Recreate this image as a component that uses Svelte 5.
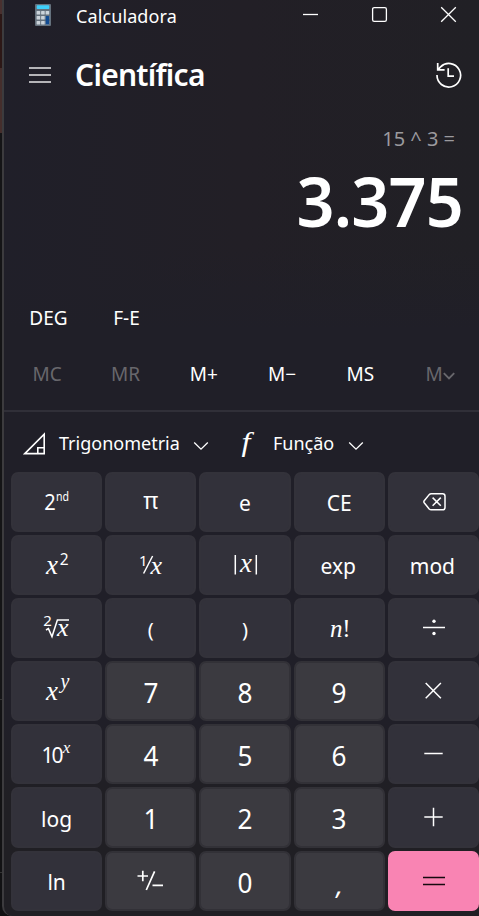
<script>
  const keys = [
    { id: 'second' }, { id: 'pi' }, { text: 'e' }, { text: 'CE' }, { id: 'back' },
    { id: 'square' }, { id: 'inverse' }, { id: 'abs' }, { text: 'exp', dx: -1 }, { text: 'mod', dx: -1 },
    { id: 'root' }, { text: '(', cls: 'paren' }, { text: ')', cls: 'paren' }, { id: 'fact' }, { id: 'divide' },
    { id: 'power' }, { num: '7' }, { num: '8' }, { num: '9' }, { id: 'times' },
    { id: 'ten' }, { num: '4' }, { num: '5' }, { num: '6' }, { id: 'minus' },
    { text: 'log' }, { num: '1' }, { num: '2' }, { num: '3' }, { id: 'plus' },
    { text: 'ln' }, { id: 'sign', light: true }, { num: '0' }, { num: ',' }, { id: 'equals' }
  ];
  const memory = [
    ['MC', true], ['MR', true], ['M+', false], ['M−', false], ['MS', false]
  ];
</script>

<div class="desk">
  <main class="window">
    <header class="titlebar">
      <svg class="logo" width="18" height="24" viewBox="0 0 18 24">
        <rect x="1" y="1" width="16" height="22" rx="1" fill="#65717d" />
        <rect x="2.7" y="2.3" width="12.6" height="3.6" rx=".6" fill="#3fd0fb" />
        {#each [8, 13, 18] as y}
          {#each [2.6, 7.1, 11.6] as x}
            <rect {x} {y} width="3.6" height="3.5" rx=".5" fill="#cbd3da" />
          {/each}
        {/each}
        <rect x="11.6" y="13" width="3.6" height="8.5" rx=".5" fill="#104a91" />
      </svg>
      <span class="app">Calculadora</span>
      <svg class="controls" width="156" height="20" viewBox="0 0 156 20" fill="none" stroke="#fff" stroke-width="1.3">
        <path d="M1 10.5H16" />
        <rect x="70.6" y="3.6" width="13.8" height="13.8" rx="1.6" />
        <path d="M139.2 3.2l14.6 14.6M153.8 3.2L139.2 17.8" />
      </svg>
    </header>

    <div class="heading">
      <svg width="24" height="18" viewBox="0 0 24 18" stroke="#e6e6e8" stroke-width="1.4">
        <path d="M1 2H23M1 9H23M1 16H23" />
      </svg>
      <h1>Científica</h1>
      <svg class="history" width="28" height="28" viewBox="0 0 28 28" fill="none" stroke="#fff" stroke-width="1.7">
        <path d="M2 14A11.8 11.8 0 1 0 5.6 5.8L3.2 8.6M2.7 2V8.9H9.6M13.2 7.2V15.2H19" />
      </svg>
    </div>

    <div class="expression">15 ^ 3 =</div>
    <div class="result">3.375</div>

    <div class="modes"><span>DEG</span><span>F-E</span></div>
    <div class="memory">
      {#each memory as [label, off]}
        <span class:off>{label}</span>
      {/each}
      <span class="off last">M<svg width="12" height="8" viewBox="0 0 12 8" fill="none" stroke="currentColor" stroke-width="1.9"><path d="M.8 1.2L6 6.4L11.2 1.2" /></svg></span>
    </div>

    <div class="groups">
      <svg class="angle" width="24" height="24" viewBox="0 0 24 24" fill="none" stroke="#fff" stroke-width="1.6">
        <path d="M1.8 21.6L21.2 2.2V21.6ZM14.8 21.6V15.8H21.2" />
      </svg>
      <span class="trig">Trigonometria</span>
      <svg class="chev" width="16" height="10" viewBox="0 0 16 10" fill="none" stroke="#fff" stroke-width="1.3"><path d="M1.2 1.5L8 8.2L14.8 1.5" /></svg>
      <span class="f">f</span>
      <span class="func">Função</span>
      <svg class="chev" width="16" height="10" viewBox="0 0 16 10" fill="none" stroke="#fff" stroke-width="1.3"><path d="M1.2 1.5L8 8.2L14.8 1.5" /></svg>
    </div>

    <div class="keys">
      {#each keys as k}
        <button class="key" class:number={k.num || k.light} class:equals={k.id === 'equals'}>
          {#if k.num}
            <span class="digit" class:comma={k.num === ','}>{k.num}</span>
          {:else if k.text}
            <span class="word {k.cls ?? ''}" style:margin-left="{(k.dx ?? 0) * 2}px">{k.text}</span>
          {:else}
            <svg class="sym" width="91" height="60" viewBox="0 0 91 60">
              {#if k.id === 'second'}
                <text x="33.3" y="38.3" font-size="21.5" textLength="11.5" lengthAdjust="spacingAndGlyphs">2</text>
                <text x="45" y="28.5" font-size="12" textLength="13" lengthAdjust="spacingAndGlyphs">nd</text>
              {:else if k.id === 'pi'}
                <text x="38.2" y="37" font-size="23">π</text>
              {:else if k.id === 'square'}
                <text class="math" x="35" y="38.6" font-size="27">x</text>
                <text x="48.8" y="30" font-size="15.5">2</text>
              {:else if k.id === 'inverse'}
                <text x="34" y="31" font-size="15">1</text>
                <path class="line" d="M38.6 38.5L47.6 21" />
                <text class="math" x="45.6" y="38.6" font-size="26">x</text>
              {:else if k.id === 'abs'}
                <path class="line" d="M35.3 20V39.5M56.3 20V39.5" />
                <text class="math" x="40" y="36.6" font-size="27">x</text>
              {:else if k.id === 'root'}
                <text x="32.2" y="28.4" font-size="15">2</text>
                <path class="line" d="M35 32L37.4 30.6L41 38.6L46.4 22H58" />
                <text class="math" x="46" y="38.4" font-size="26">x</text>
              {:else if k.id === 'fact'}
                <text class="math" x="36" y="38.6" font-size="25">n</text>
                <text class="serif" x="48.3" y="38.6" font-size="25">!</text>
              {:else if k.id === 'power'}
                <text class="math" x="35" y="39" font-size="27">x</text>
                <text class="math" x="49.5" y="27" font-size="20">y</text>
              {:else if k.id === 'ten'}
                <text x="30.6" y="38.6" font-size="21" letter-spacing="-2">10</text>
                <text class="math" x="51.8" y="29" font-size="17">x</text>
              {:else if k.id === 'sign'}
                <path class="line thick" d="M32.5 25H43M37.8 19.8V30.3M41.3 39L49.6 20.3M47.5 34.3H58" />
              {:else if k.id === 'back'}
                <path class="line" stroke-linejoin="round" d="M43.2 21.8H54.6Q57 21.8 57 24.2V35.4Q57 37.8 54.6 37.8H43.2Q42 37.8 41.2 37L36.2 30.8Q35.5 29.8 36.2 28.8L41.2 22.6Q42 21.8 43.2 21.8ZM44.6 25.6L52.8 33.8M52.8 25.6L44.6 33.8" />
              {:else if k.id === 'divide'}
                <path class="line" d="M35 29.4H57" /><circle cx="46" cy="23.3" r="1.7" /><circle cx="46" cy="35.5" r="1.7" />
              {:else if k.id === 'times'}
                <path class="line" d="M37.7 22L52.9 37.2M52.9 22L37.7 37.2" />
              {:else if k.id === 'minus'}
                <path class="line" d="M36.3 29.4H54.7" />
              {:else if k.id === 'plus'}
                <path class="line" d="M36.3 29H54.7M45.5 19.8V38.2" />
              {:else if k.id === 'equals'}
                <path class="line dark" d="M35 26.5H57M35 33.5H57" />
              {/if}
            </svg>
          {/if}
        </button>
      {/each}
    </div>
  </main>
</div>

<style>
  :global(body) { margin: 0; overflow: hidden; }
  .desk {
    box-sizing: border-box;
    width: 479px;
    height: 916px;
    padding-left: 2px;
    background: linear-gradient(#49302f 0 14px, #2c1716 14px 68px, #452e2c 68px 133px, #141416 133px 699px, #333 699px 700px, #121214 700px 872px, #333 872px 873px, #111113 873px);
    font-family: "Noto Sans", sans-serif;
    color: #fff;
  }
  .window {
    box-sizing: border-box;
    height: 916px;
    border-left: 2px solid #3c3b3e;
    border-bottom-left-radius: 10px;
    background: linear-gradient(#21202800 0 250px, #201f28 330px 720px, #201f24 800px), linear-gradient(90deg, #201f29, #221f26 50%, #212025);
    display: flex;
    flex-direction: column;
  }
  .titlebar { height: 32px; display: flex; line-height: 32px; font-size: 18px; }
  .logo { margin: 3px 0 0 30px; }
  .app { margin-left: 24px; width: 110px; letter-spacing: .1px; }
  .controls { margin: 4px 0 0 auto; padding-right: 21px; }
  .heading { height: 86px; display: flex; align-items: center; }
  .heading > svg:first-child { margin-left: 24px; }
  h1 { margin: 0 0 0 23px; font-size: 30px; font-weight: 600; letter-spacing: -0.75px; line-height: 40px; }
  .history { margin: 0 16px 0 auto; }
  .expression { height: 40px; line-height: 42px; padding-right: 24px; text-align: right; font-size: 20px; color: #9b9a9e; }
  .result {
    height: 84px;
    line-height: 84px;
    padding-right: 16px;
    text-align: right;
    font-size: 69px;
    font-weight: 600;
    letter-spacing: -.8px;
    transform: scaleX(.964);
    transform-origin: 463px 0;
  }
  .modes { margin-top: 48px; height: 56px; line-height: 56px; display: flex; font-size: 19px; }
  .modes span { width: 83px; text-align: center; }
  .modes span:first-child { margin-left: 3px; }
  .modes span:last-child { margin-left: -5px; }
  .memory { height: 64px; line-height: 56px; display: grid; grid-template-columns: repeat(6, 78.3px); padding-left: 4px; font-size: 19px; text-align: center; border-bottom: 2px solid #302f38; }
  .memory svg { vertical-align: 1.5px; }
  .last { padding-left: 3px; }
  .off { color: #68676c; }
  .groups { height: 60px; padding-top: 4px; box-sizing: border-box; display: flex; align-items: center; font-size: 18px; line-height: 30px; }
  .angle { margin-left: 19px; }
  .trig { margin: -2px 0 0 12px; width: 122px; }
  .chev { margin: 4px 0 0 12px; }
  .f { font: italic 28px/30px "Liberation Serif", serif; margin: -4px 0 0 33px; width: 31px; transform: scaleX(1.15); transform-origin: 4px 0; }
  .func { margin-top: -2px; width: 63px; }
  .keys {
    height: 439px;
    padding-left: 7px;
    display: grid;
    grid-template-columns: repeat(5, 1fr);
    grid-template-rows: repeat(5, 60px) 61px 60px;
    gap: 3px;
  }
  .key {
    font: inherit;
    color: #fff;
    margin: 0;
    padding: 0;
    min-width: 0;
    overflow: hidden;
    border: 2px solid #33323a;
    border-radius: 7px;
    background: #32313a;
    display: flex;
    align-items: center;
    justify-content: center;
  }
  .number { background: #3b3a40; border-color: #323137; }
  .equals { background: #f984b3; border-color: #f984b3; }
  .word { font-size: 21px; line-height: 30px; padding-top: 2px; }
  .paren { font-size: 20px; padding-top: 3px; }
  .digit { font-size: 27.5px; line-height: 36px; padding-top: 3px; transform: scaleX(.95); }
  .comma { padding-top: 5px; font-style: italic; }
  .sym { flex: none; fill: #fff; }
  .math { font-family: "Liberation Serif", serif; font-style: italic; }
  .serif { font-family: "Liberation Serif", serif; }
  .line { fill: none; stroke: #fff; stroke-width: 1.5; }
  .thick { stroke-width: 1.7; }
  .dark { stroke: #16090f; }
</style>
